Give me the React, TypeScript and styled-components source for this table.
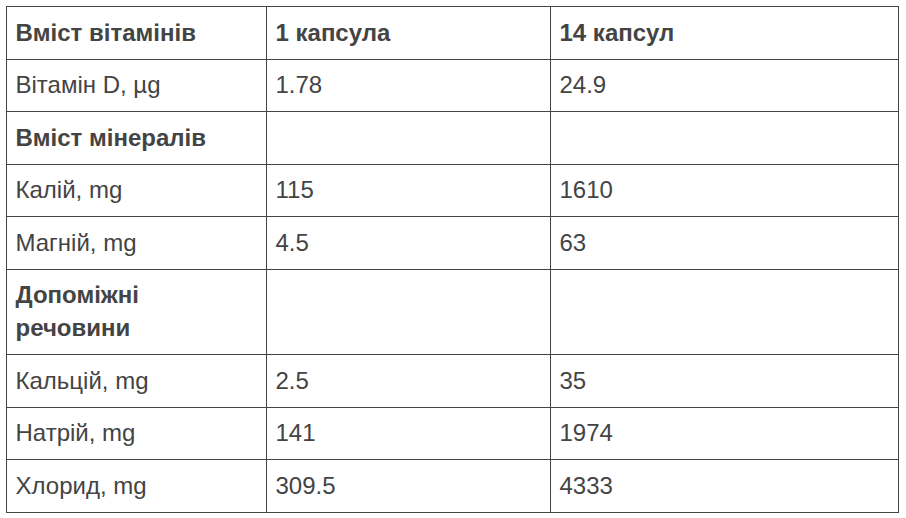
import React from "react";
import styled, { createGlobalStyle } from "styled-components";

const Global = createGlobalStyle`
  html, body { margin: 0; padding: 0; background: #fff; }
  body { font-family: "Liberation Sans", Arial, sans-serif; }
`;

const Wrap = styled.div`
  padding: 6px 0 0 6px;
`;

const Table = styled.table`
  border-collapse: collapse;
  table-layout: fixed;
  width: 892px;
  color: #444;
  font-size: 24px;
  line-height: 33px;
`;

const LabelCol = styled.col`
  width: 260px;
`;

const MidCol = styled.col`
  width: 284px;
`;

const LastCol = styled.col`
  width: 348px;
`;

const Cell = styled.td<{ $bold?: boolean }>`
  border: 1px solid #444;
  padding: 8.75px 9px 9.75px 8.5px;
  font-weight: ${(p) => (p.$bold ? 700 : 400)};
  vertical-align: top;
  text-align: left;
`;

type RowData = { cells: string[]; bold?: boolean };

const rows: RowData[] = [
  { cells: ["Вміст вітамінів", "1 капсула", "14 капсул"], bold: true },
  { cells: ["Вітамін D, µg", "1.78", "24.9"] },
  { cells: ["Вміст мінералів", "", ""], bold: true },
  { cells: ["Калій, mg", "115", "1610"] },
  { cells: ["Магній, mg", "4.5", "63"] },
  { cells: ["Допоміжні речовини", "", ""], bold: true },
  { cells: ["Кальцій, mg", "2.5", "35"] },
  { cells: ["Натрій, mg", "141", "1974"] },
  { cells: ["Хлорид, mg", "309.5", "4333"] },
];

export default function App() {
  return (
    <>
      <Global />
      <Wrap>
        <Table>
          <colgroup>
            <LabelCol />
            <MidCol />
            <LastCol />
          </colgroup>
          <tbody>
            {rows.map((r, i) => (
              <tr key={i}>
                {r.cells.map((c, j) => (
                  <Cell key={j} $bold={r.bold}>
                    {c}
                  </Cell>
                ))}
              </tr>
            ))}
          </tbody>
        </Table>
      </Wrap>
    </>
  );
}
